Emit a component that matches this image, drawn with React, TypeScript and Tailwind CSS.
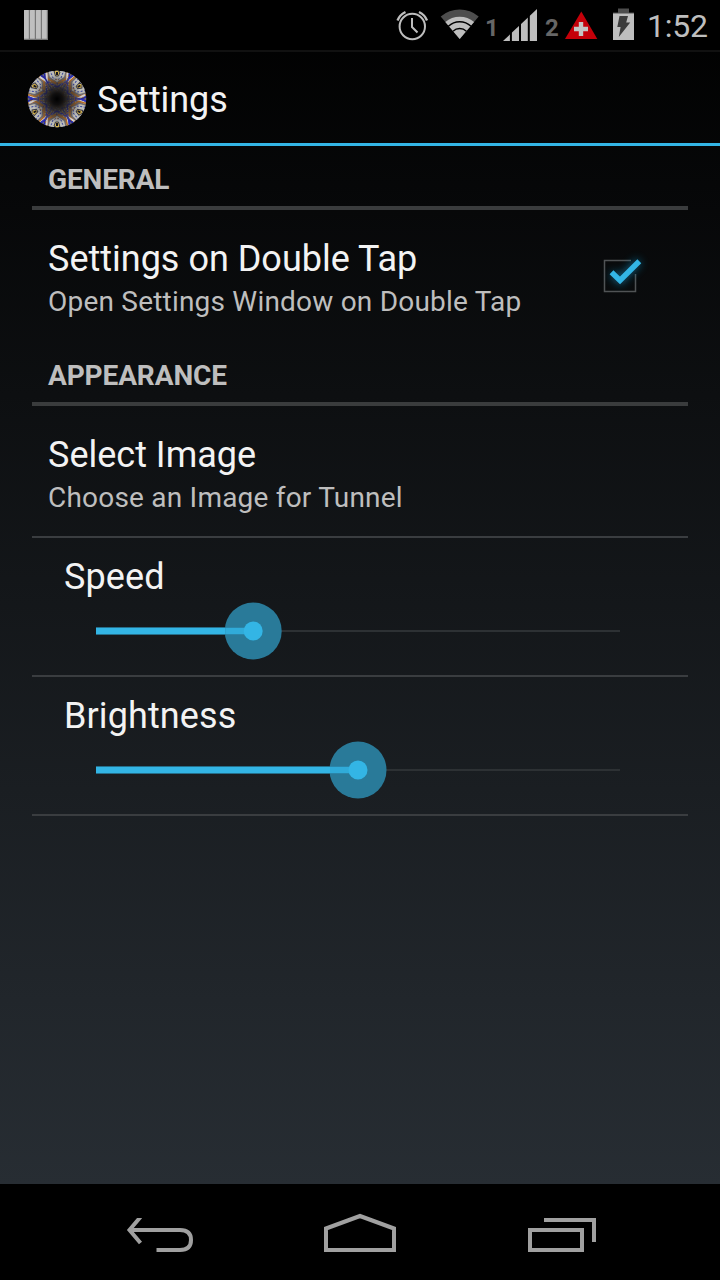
import type { ReactNode } from "react";

function AlarmIcon() {
  return (
    <svg width="34" height="34" viewBox="395 8 34 34" fill="none" stroke="#bebebe" strokeWidth="2">
      <circle cx="412.3" cy="26.5" r="12.7" />
      <path d="M412 18v9l5.500 5.500" />
      <path d="M397.500 20.500q2-5.500 8-8.500M427 20.500q-2-5.500-8-8.500" strokeWidth="2.300" />
    </svg>
  );
}

function WifiIcon() {
  return (
    <svg width="40" height="32" viewBox="440 8 40 32">
      <path d="M459.700 39L440.700 16.500A29.500 29.500 0 0 1 478.700 16.500Z" fill="#4d4d4d" />
      <path d="M459.700 39L445.300 22A22.300 22.300 0 0 1 474.100 22Z" fill="#bebebe" />
      <path d="M448.400 26.300A16.500 16.500 0 0 1 471 26.300M453 31.200A10 10 0 0 1 466.400 31.200" fill="none" stroke="#000" strokeWidth="1.500" />
    </svg>
  );
}

function SignalIcon() {
  return (
    <svg width="34" height="33" viewBox="503 9 34 33">
      <path d="M503 41L537 9V41Z" fill="#bebebe" />
      <path d="M510.900 9V41M520 9V41M528.800 9V41" stroke="#000" strokeWidth="2" />
    </svg>
  );
}

function StatusBar() {
  return (
    <header className="flex h-[50px] items-start bg-black text-[#bebebe]">
      <svg className="mt-[10px] ml-6 shrink-0" width="24" height="30" viewBox="0 0 24 30">
        {[0, 6, 12, 18].map((x) => (
          <g key={x}>
            <rect x={x} width="6" height="30" fill="#777" />
            <rect x={x} width="4.800" height="28.800" rx=".5" fill="#bfbfbf" />
          </g>
        ))}
      </svg>
      <div className="mt-2 ml-[347px] shrink-0"><AlarmIcon /></div>
      <div className="mt-2 ml-[11px] shrink-0"><WifiIcon /></div>
      <span className="mt-[12px] ml-[5px] w-[18px] text-[24px] leading-[32px] font-bold text-[#666]">1</span>
      <div className="mt-[9px] shrink-0"><SignalIcon /></div>
      <span className="mt-[12px] ml-2 w-[20px] text-[24px] leading-[32px] font-bold text-[#666]">2</span>
      <svg className="mt-[11px] shrink-0" width="33" height="29" viewBox="565 11 33 29">
        <path d="M581.300 11.500L597.300 39H565Z" fill="#c40009" />
        <path d="M578.800 22h4.400v4.800h4.800v4.400h-4.800v4.800h-4.400v-4.800H574v-4.400h4.800Z" fill="#c4c4c4" />
      </svg>
      <svg className="mt-2 ml-[15px] shrink-0" width="21" height="32" viewBox="613 8 21 32">
        <path d="M618 8.500h11v4h5v2h-21v-2h5Z" fill="#4d4d4d" />
        <rect x="613" y="13.500" width="21" height="26.500" fill="#bebebe" />
        <path d="M619.500 16H628l-1.800 6.500h4L618.800 37l1.800-10h-3.300Z" fill="#3c3c3c" />
      </svg>
      <span className="mt-[6px] ml-[13px] text-[32px] leading-[40px] tracking-[-0.2px]">1:52</span>
    </header>
  );
}

function TunnelIcon() {
  const sectors = Array.from({ length: 6 }, (_, i) => i * 60);
  return (
    <svg width="60" height="58" viewBox="-30 -29 60 58" preserveAspectRatio="none">
      <defs>
        <radialGradient id="tunnel" gradientUnits="userSpaceOnUse" cx="0" cy="0" r="29">
          <stop offset="0" stopColor="#000" />
          <stop offset=".2" stopColor="#0c0b0b" stopOpacity=".95" />
          <stop offset=".5" stopColor="#1c1a1a" stopOpacity=".6" />
          <stop offset=".85" stopColor="#222" stopOpacity="0" />
        </radialGradient>
        <clipPath id="disc"><ellipse rx="29.300" ry="28.300" /></clipPath>
      </defs>
      <g clipPath="url(#disc)">
        <circle r="30" fill="#706c70" />
        {sectors.map((a) => (
          <g key={a} transform={`rotate(${a})`} fill="none">
            <path d="M-9-30L-7-22L0-17L7-22L9-30Z" fill="#bdbdb8" />
            <path d="M-11-29L-9-20L0-15L9-20L11-29" stroke="#b56c24" strokeWidth="1.500" />
            <path d="M-13-28L-11-18L0-12L11-18L13-28" stroke="#2b2fc0" strokeWidth="1.300" />
            <path d="M-7-29L-4-21L0-19L4-21L7-29" stroke="#3440a0" strokeWidth="1" strokeDasharray="2 1.500" />
            <path d="M-3-28L0-29L3-27L1.500-23L-1.500-23Z" fill="#d5b54e" stroke="#39394a" />
            <path d="M0-27v3" stroke="#14141f" strokeWidth="2" />
            <path d="M-15-22L-5-13L0-5L5-13L15-22M-12-13L0-20L12-13" stroke="#9c6c3b" strokeWidth="1" strokeDasharray="2 1" />
            <path d="M-12-20L-5-9L0-16L5-9L12-20" stroke="#3c4290" strokeWidth="1" strokeDasharray="2 1" />
            <path d="M-7-18L0-8L7-18M-8-11L0-15L8-11" stroke="#b0a89f" strokeWidth=".8" strokeDasharray="1 1.500" />
            <g transform="rotate(30)">
              <path d="M-4-28L0-20L4-28" stroke="#d0d0d4" strokeWidth="2" />
              <path d="M-2-29L0-24L2-29M0-24V-18" stroke="#24279f" strokeWidth="1.500" />
            </g>
          </g>
        ))}
        <circle r="30" fill="url(#tunnel)" />
      </g>
    </svg>
  );
}

function SectionTitle({ children }: { children: ReactNode }) {
  return (
    <h2 className="h-16 border-b-4 border-[#3a3c3d] px-4 pt-[14px] text-[28px] leading-[40px] font-bold tracking-[-0.12px] text-[#bebebe]">
      {children}
    </h2>
  );
}

function Preference({ title, summary, children }: { title: ReactNode; summary: ReactNode; children?: ReactNode }) {
  return (
    <div className="flex justify-between px-4 pt-[27px]">
      <div>
        <div className="text-[36px] leading-[44px] text-[#f3f3f3]">{title}</div>
        <div className="mt-[3px] text-[28px] leading-[36px] tracking-[0.21px] text-[#bebebe]">{summary}</div>
      </div>
      {children}
    </div>
  );
}

function CheckBox() {
  return (
    <svg className="mt-[5px] mr-[20px] shrink-0" width="64" height="64" viewBox="588 242 64 64">
      <defs>
        <filter id="halo" x="-50%" y="-50%" width="200%" height="200%"><feGaussianBlur stdDeviation="4" /></filter>
      </defs>
      <path d="M631 260.500H604.500V291.500H635.500V274" fill="none" stroke="#505355" strokeWidth="1.500" />
      <path d="M612 273L620 280.500L639 261" fill="none" stroke="#168abb" strokeWidth="7" opacity=".65" filter="url(#halo)" />
      <path d="M611.500 272.300L620 280.500L639.300 261.200" fill="none" stroke="#33b5e5" strokeWidth="5.500" />
    </svg>
  );
}

function SeekBar({ label, value }: { label: ReactNode; value: number }) {
  const x = value * 524;
  return (
    <div className="h-[139px] border-b-2 border-[#3a3d40] px-8 pt-[17px]">
      <div className="text-[36px] leading-[44px] tracking-[0.1px] text-[#f3f3f3]">{label}</div>
      <svg className="ml-8 block overflow-visible" width="524" height="64" viewBox="0 0 524 64">
        <path d="M0 32H524" stroke="#2d3134" strokeWidth="2" />
        <circle cx={x} cy="32" r="28.500" fill="#297a99" />
        <path d={`M0 32H${x - 28}`} stroke="#256f8b" strokeWidth="8" />
        <path d={`M0 32H${x - 28}`} stroke="#33b5e5" strokeWidth="6" />
        <path d={`M${x - 28} 32H${x}`} stroke="#30abd9" strokeWidth="6.500" />
        <circle cx={x} cy="32" r="9.500" fill="#33b5e5" />
      </svg>
    </div>
  );
}

function NavigationBar() {
  return (
    <nav className="flex h-24 items-start bg-black">
      <svg className="mt-[34px] ml-[126px]" width="68" height="36" viewBox="126 1218 68 36" fill="none" stroke="#a0a0a0" strokeWidth="4">
        <path d="M130 1230H180Q191 1230 191 1240Q191 1250 180 1250H156.500M140.500 1217L129.500 1230L140.500 1243" />
      </svg>
      <svg className="mt-[28px] ml-[129px]" width="74" height="42" viewBox="323 1212 74 42" fill="none" stroke="#a0a0a0" strokeWidth="4">
        <path d="M326 1250V1228.500L360 1216L394 1228.500V1250Z" />
      </svg>
      <svg className="mt-[34px] ml-[131px]" width="68" height="34" viewBox="528 1218 68 34" fill="none" stroke="#a0a0a0" strokeWidth="4">
        <path d="M530 1230H582V1250H530ZM544 1220H594V1242" />
      </svg>
    </nav>
  );
}

export default function App() {
  return (
    <div className="flex h-[1280px] w-[720px] flex-col overflow-hidden bg-black font-['Roboto',sans-serif]">
      <div className="flex h-[1184px] flex-col bg-[linear-gradient(to_bottom,#000000,#272d33)]">
        <StatusBar />
        <div className="flex h-24 items-start border-t-2 border-b-[3px] border-t-[#111] border-b-[#33b5e5]">
          <div className="mt-[18px] ml-[27px]"><TunnelIcon /></div>
          <h1 className="mt-[26px] ml-[10px] text-[36px] leading-[44px] tracking-[-0.1px] text-[#f3f3f3]">Settings</h1>
        </div>
        <main className="px-8">
          <SectionTitle>GENERAL</SectionTitle>
          <div className="h-[132px]">
            <Preference title="Settings on Double Tap" summary="Open Settings Window on Double Tap">
              <CheckBox />
            </Preference>
          </div>
          <SectionTitle>APPEARANCE</SectionTitle>
          <div className="h-[132px] border-b-2 border-[#3a3d40]">
            <Preference title="Select Image" summary="Choose an Image for Tunnel" />
          </div>
          <SeekBar label="Speed" value={0.3} />
          <SeekBar label="Brightness" value={0.5} />
        </main>
      </div>
      <NavigationBar />
    </div>
  );
}
